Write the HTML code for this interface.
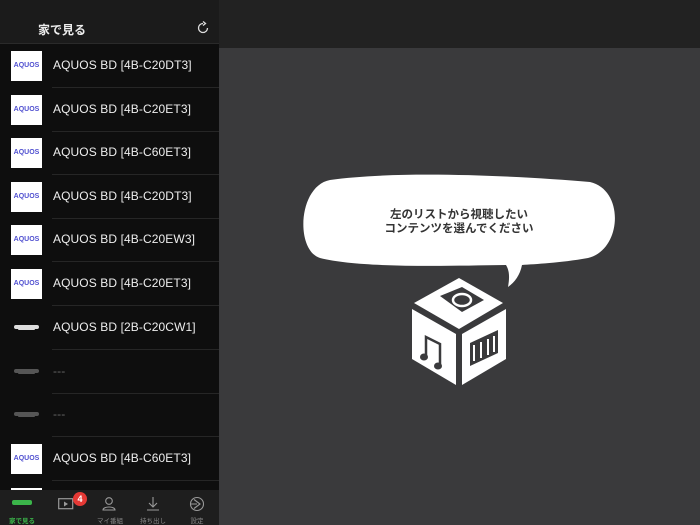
<!DOCTYPE html>
<html><head><meta charset="utf-8"><style>
*{margin:0;padding:0;box-sizing:border-box}
body{width:700px;height:525px;overflow:hidden;background:#3a3a3c;font-family:"Liberation Sans","Noto Sans CJK JP",sans-serif;position:relative}
#left{position:absolute;left:0;top:0;width:219px;height:525px;background:#0e0e0e}
#hdr{height:44px;background:#1b1b1b;border-bottom:1px solid #2a2a2a;position:relative}
#hdr .t{position:absolute;left:38px;top:21px;color:#eee;font-size:12px;font-weight:bold}
#topr{position:absolute;left:219px;top:0;width:481px;height:48px;background:#222}
.row{position:absolute;left:0;width:219px;height:44px}
.row .ic{position:absolute;left:11px;top:7px;width:31px;height:30px;background:#fff;color:#5050d0;font-size:7px;font-weight:bold;text-align:center;line-height:30px}
.row .tx{position:absolute;left:53px;top:14px;color:#eee;font-size:12px;letter-spacing:.1px}
.row .ln{position:absolute;left:52px;right:0;bottom:0;height:1px;background:#262626}
.bar{position:absolute;left:14px;width:25px;height:4px;border-radius:2px}
.bar:after{content:"";position:absolute;left:4px;right:4px;top:3px;height:2px;background:inherit;border-radius:1px}
#tab{position:absolute;left:0;top:490px;width:219px;height:35px;background:#1e1e1e}
.tl{position:absolute;top:25px;font-size:6.5px;color:#888;width:44px;text-align:center}
</style></head><body>
<div id="topr"></div>
<div id="left">
<div id="hdr"><div class="t">家で見る</div>
<svg style="position:absolute;left:196px;top:21px" width="14" height="14" viewBox="0 0 14 14"><path d="M11.5 7A4.5 4.5 0 1 1 7 2.5" fill="none" stroke="#ddd" stroke-width="1.3"/><path d="M7 .5L9.5 2.5 7 4.5" fill="none" stroke="#ddd" stroke-width="1.3"/></svg></div>
<div class="row" style="top:44px"><div class="ic">AQUOS</div><div class="tx">AQUOS BD [4B-C20DT3]</div><div class="ln"></div></div>
<div class="row" style="top:88px"><div class="ic">AQUOS</div><div class="tx">AQUOS BD [4B-C20ET3]</div><div class="ln"></div></div>
<div class="row" style="top:131px"><div class="ic">AQUOS</div><div class="tx">AQUOS BD [4B-C60ET3]</div><div class="ln"></div></div>
<div class="row" style="top:175px"><div class="ic">AQUOS</div><div class="tx">AQUOS BD [4B-C20DT3]</div><div class="ln"></div></div>
<div class="row" style="top:218px"><div class="ic">AQUOS</div><div class="tx">AQUOS BD [4B-C20EW3]</div><div class="ln"></div></div>
<div class="row" style="top:262px"><div class="ic">AQUOS</div><div class="tx">AQUOS BD [4B-C20ET3]</div><div class="ln"></div></div>
<div class="row" style="top:306px"><div class="bar" style="top:19px;background:#ddd"></div><div class="tx">AQUOS BD [2B-C20CW1]</div><div class="ln"></div></div>
<div class="row" style="top:350px"><div class="bar" style="top:19px;background:#555"></div><div class="tx" style="color:#666">---</div><div class="ln"></div></div>
<div class="row" style="top:393px"><div class="bar" style="top:19px;background:#555"></div><div class="tx" style="color:#666">---</div><div class="ln"></div></div>
<div class="row" style="top:437px"><div class="ic">AQUOS</div><div class="tx">AQUOS BD [4B-C60ET3]</div><div class="ln"></div></div>
<div class="row" style="top:481px"><div class="ic" style="top:7px;height:3px"></div></div>
<div id="tab">
<div style="position:absolute;left:12px;top:10px;width:20px;height:5px;background:#3bb54a;border-radius:2px"></div>
<div class="tl" style="left:0;color:#3bb54a;font-weight:bold">家で見る</div>
<svg style="position:absolute;left:58px;top:8px" width="16" height="12"><rect x=".7" y=".7" width="14" height="10" fill="none" stroke="#999" stroke-width="1.2"/><path d="M6 3.5v5l4-2.5z" fill="#999"/></svg>
<div style="position:absolute;left:73px;top:2px;width:14px;height:14px;border-radius:7px;background:#e53935;color:#fff;font-size:9px;text-align:center;line-height:14px;font-weight:bold">4</div>
<svg style="position:absolute;left:102px;top:6px" width="14" height="16"><circle cx="7" cy="5" r="3.3" fill="none" stroke="#999" stroke-width="1.1"/><path d="M1 14c0-4 12-4 12 0z" fill="none" stroke="#999" stroke-width="1.1"/></svg>
<div class="tl" style="left:88px">マイ番組</div>
<svg style="position:absolute;left:146px;top:6px" width="14" height="16"><path d="M7 1v10M3 7l4 4 4-4M1 14h12" fill="none" stroke="#999" stroke-width="1.1"/></svg>
<div class="tl" style="left:131px">持ち出し</div>
<svg style="position:absolute;left:189px;top:6px" width="16" height="16"><circle cx="8" cy="8" r="6.5" fill="none" stroke="#999" stroke-width="1.1"/><path d="M5 3.5l6 4.5-6 4.5M8 8H1.5" fill="none" stroke="#999" stroke-width="1.1"/></svg>
<div class="tl" style="left:175px">設定</div>
</div>
</div>
<svg style="position:absolute;left:0;top:0" width="700" height="525">
<path d="M330 180C400 170 520 176 590 182C625 190 622 250 588 258C560 263 535 264 522 265C520 275 515 282 508 287C510 276 509 270 506 265C440 266 360 268 320 258C295 250 298 186 330 180Z" fill="#fff"/>
<text x="459" y="218" font-size="11.5" font-weight="bold" fill="#333" text-anchor="middle" font-family="Liberation Sans,Noto Sans CJK JP,sans-serif">左のリストから視聴したい</text>
<text x="459" y="232" font-size="11.5" font-weight="bold" fill="#333" text-anchor="middle" font-family="Liberation Sans,Noto Sans CJK JP,sans-serif">コンテンツを選んでください</text>
<path d="M459 278L503 303 459 329 414 303Z" fill="#fff"/>
<path d="M412 309L456 334 456 385 412 359Z" fill="#fff"/>
<path d="M462 334L506 309 506 359 462 385Z" fill="#fff"/>
<path d="M440 296L462 287 484 300 462 312Z" fill="#3a3a3c"/>
<ellipse cx="462" cy="300" rx="9" ry="6" fill="none" stroke="#fff" stroke-width="2.5"/>
<path d="M426 357L426 337 440 344 440 365" fill="none" stroke="#3a3a3c" stroke-width="2.5"/>
<ellipse cx="424" cy="357" rx="4" ry="3.5" fill="#3a3a3c"/><ellipse cx="438" cy="366" rx="4" ry="3.5" fill="#3a3a3c"/>
<path d="M470 343L498 330 498 353 470 366Z" fill="#3a3a3c"/>
<path d="M474 345v16M481 342v16M488 339v16M494 336v16" stroke="#fff" stroke-width="2"/>
</svg>
</body></html>
